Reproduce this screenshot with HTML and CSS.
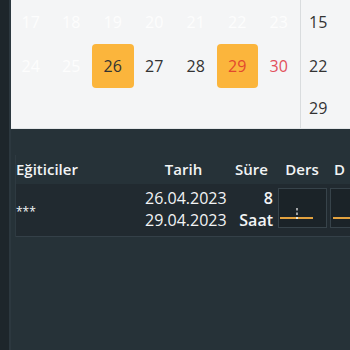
FILE: index.html
```html
<!DOCTYPE html>
<html lang="tr">
<head>
<meta charset="utf-8">
<link rel="stylesheet" href="styles.css">
</head>
<body>
<div class="app">
  <div class="rail"></div>
  <div class="main">
    <div class="calendar">
      <div class="days">
        <div class="day faint">17</div>
        <div class="day faint">18</div>
        <div class="day faint">19</div>
        <div class="day faint">20</div>
        <div class="day faint">21</div>
        <div class="day faint">22</div>
        <div class="day faint">23</div>
        <div class="day faint">24</div>
        <div class="day faint">25</div>
        <div class="day"><span class="mark">26</span></div>
        <div class="day">27</div>
        <div class="day">28</div>
        <div class="day"><span class="mark red">29</span></div>
        <div class="day red">30</div>
      </div>
      <div class="weeks">
        <div class="week">15</div>
        <div class="week">22</div>
        <div class="week">29</div>
      </div>
    </div>
    <div class="lower">
      <div class="table">
        <div class="row head">
          <div class="cell c-name">Eğiticiler</div>
          <div class="cell c-date center">Tarih</div>
          <div class="cell c-dur center">Süre</div>
          <div class="cell c-ders center">Ders</div>
          <div class="cell c-d">D</div>
        </div>
        <div class="row data">
          <div class="cell c-name mid">***</div>
          <div class="cell c-date lines"><span>26.04.2023</span><span>29.04.2023</span></div>
          <div class="cell c-dur lines right"><span>8</span><span>Saat</span></div>
          <div class="cell c-ders">
            <div class="slot">
              <svg width="49" height="40" viewBox="0 0 49 40">
                <line x1="2" y1="30" x2="35" y2="30" stroke="#e3a23f" stroke-width="2"/>
                <line x1="19" y1="20" x2="19" y2="22.5" stroke="#cfcfcf" stroke-width="1.5"/>
                <line x1="19" y1="24.5" x2="19" y2="27" stroke="#cfcfcf" stroke-width="1.5"/>
                <line x1="19" y1="29" x2="19" y2="31" stroke="#f1ead6" stroke-width="2"/>
              </svg>
            </div>
          </div>
          <div class="cell c-d">
            <div class="slot slot2">
              <svg width="30" height="40" viewBox="0 0 30 40">
                <line x1="3" y1="30" x2="30" y2="30" stroke="#e3a23f" stroke-width="2"/>
              </svg>
            </div>
          </div>
        </div>
      </div>
    </div>
  </div>
</div>
</body>
</html>
```
FILE: styles.css
```css
html, body {
  margin: 0;
  padding: 0;
}
body {
  width: 350px;
  height: 350px;
  overflow: hidden;
  background: #263238;
  font-family: "Open Sans", "Noto Sans", sans-serif;
}
.app {
  display: flex;
  height: 350px;
}
.rail {
  width: 9px;
  background: #1d262b;
  border-right: 2px solid #2c383f;
  flex: none;
}
.main {
  flex: 1;
  display: flex;
  flex-direction: column;
  min-width: 0;
}
.calendar {
  height: 128px;
  background: #f4f5f6;
  border-bottom: 1px solid #e3e6e8;
  display: flex;
}
.days {
  width: 289px;
  display: grid;
  grid-template-columns: 39.5px repeat(6, 41.5px);
  grid-template-rows: 44px 44px 40px;
  flex: none;
}
.day {
  display: flex;
  align-items: center;
  justify-content: center;
  font-size: 16px;
  color: #333;
}
.day.faint {
  color: #fdfdfd;
}
.day.red {
  color: #e2505b;
}
.mark {
  width: 42px;
  height: 44px;
  border-radius: 4px;
  background: #fbb53c;
  display: flex;
  align-items: center;
  justify-content: center;
  color: #333;
}
.mark.red {
  color: #e2482e;
}
.weeks {
  flex: 1;
  border-left: 1px solid #d9dcde;
  display: grid;
  grid-template-rows: 44px 44px 40px;
}
.week {
  display: flex;
  align-items: center;
  padding-left: 8px;
  font-size: 16px;
  color: #333;
}
.lower {
  flex: 1;
  padding-top: 26px;
}
.table {
  border-left: 1px solid #2e3a41;
  margin-left: 4px;
}
.row {
  display: grid;
  grid-template-columns: 124px 87px 49px 52px 1fr;
}
.row.head {
  height: 28px;
  align-items: center;
  color: #f2f4f5;
  font-size: 15px;
  font-weight: 600;
}
.row.data {
  height: 52px;
  margin-top: 1px;
  background: #212a30;
  border-bottom: 1px solid #344048;
  color: #f2f4f5;
  font-size: 16px;
}
.cell {
  white-space: nowrap;
  overflow: hidden;
}
.center {
  text-align: center;
}
.mid {
  display: flex;
  align-items: center;
  font-size: 12px;
  padding-top: 2px;
}
.lines {
  display: flex;
  flex-direction: column;
  justify-content: center;
  line-height: 22px;
  padding-bottom: 2px;
}
.c-date.lines {
  padding-left: 5px;
}
.right {
  align-items: flex-end;
  padding-right: 3px;
  font-weight: 600;
}
.c-d {
  padding-left: 6px;
}
.slot {
  margin: 4px 0 0 2px;
  width: 49px;
  height: 40px;
  box-sizing: border-box;
  background: #1b2328;
  border: 1px solid #37434a;
}
.slot svg {
  display: block;
  margin: -1px;
}
.slot2 {
  margin-left: -4px;
  width: 40px;
}
```
